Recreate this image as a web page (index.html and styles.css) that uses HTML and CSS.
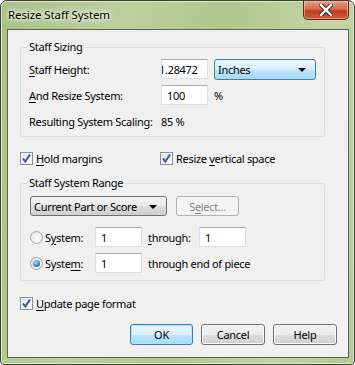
FILE: index.html
```html
<!DOCTYPE html>
<html lang="en">
<head>
    <meta charset="UTF-8">
    <title>Resize Staff System</title>
    <link rel="stylesheet" href="styles.css">
</head>
<body>
    <div class="window">
        <div class="titlebar">
            <span class="title">Resize Staff System</span>
            <span class="close">
                <svg width="14" height="12" viewBox="0 0 14 12">
                    <path d="M2 1 L12 11 M12 1 L2 11" stroke="#3a2a28" stroke-width="4.4" stroke-linecap="square"/>
                    <path d="M2 1 L12 11 M12 1 L2 11" stroke="#ffffff" stroke-width="2.4" stroke-linecap="square"/>
                </svg>
            </span>
        </div>

        <div class="client">
            <div class="group sizing">
                <span class="group-title">Staff Sizing</span>
                <div class="row">
                    <span class="label"><u>S</u>taff Height:</span>
                    <span class="field"><span class="scrolled">1.28472</span></span>
                    <span class="dropdown hot">Inches<span class="arrow"></span></span>
                </div>
                <div class="row">
                    <span class="label"><u>A</u>nd Resize System:</span>
                    <span class="field">100</span>
                    <span class="unit">%</span>
                </div>
                <div class="row">
                    <span class="label">Resulting System Scaling:</span>
                    <span>85 %</span>
                </div>
            </div>

            <div class="row checks">
                <span class="check-item wide">
                    <span class="checkbox"><svg width="11" height="11" viewBox="0 0 11 11"><path d="M2 5.5 L4.3 8.5 L9 1.5" fill="none" stroke="#3b55a8" stroke-width="2"/></svg></span>
                    <span><u>H</u>old margins</span>
                </span>
                <span class="check-item">
                    <span class="checkbox"><svg width="11" height="11" viewBox="0 0 11 11"><path d="M2 5.5 L4.3 8.5 L9 1.5" fill="none" stroke="#3b55a8" stroke-width="2"/></svg></span>
                    <span>Resize <u>v</u>ertical space</span>
                </span>
            </div>

            <div class="group range">
                <span class="group-title">Staff System Range</span>
                <div class="row">
                    <span class="dropdown combo">Current Part or Score<span class="arrow"></span></span>
                    <span class="button disabled"><span>S<u>e</u>lect...</span></span>
                </div>
                <div class="row radio-row first">
                    <span class="radio"></span>
                    <span class="radio-label">S<u>y</u>stem:</span>
                    <span class="field">1</span>
                    <span class="mid-label"><u>t</u>hrough:</span>
                    <span class="field">1</span>
                </div>
                <div class="row radio-row">
                    <span class="radio on"></span>
                    <span class="radio-label">Syste<u>m</u>:</span>
                    <span class="field">1</span>
                    <span class="mid-label">through end of piece</span>
                </div>
            </div>

            <div class="row update">
                <span class="check-item">
                    <span class="checkbox"><svg width="11" height="11" viewBox="0 0 11 11"><path d="M2 5.5 L4.3 8.5 L9 1.5" fill="none" stroke="#3b55a8" stroke-width="2"/></svg></span>
                    <span><u>U</u>pdate page format</span>
                </span>
            </div>

            <div class="buttons">
                <span class="button default">OK</span>
                <span class="button">Cancel</span>
                <span class="button">Help</span>
            </div>
        </div>
    </div>
</body>
</html>
```

FILE: styles.css
```css
body
{
    margin: 0;
    font-family: "Noto Sans", "Open Sans", sans-serif;
    font-size: 11px;
    letter-spacing: -0.3px;
    color: #000;
    background: #ffffff;
}
u
{
    text-decoration: underline;
    text-underline-offset: 2px;
}
.window
{
    width: 355px;
    height: 365px;
    box-sizing: border-box;
    border: 1px solid #39432f;
    border-radius: 7px 7px 4px 4px;
    padding: 0 5px 6px 6px;
    background: linear-gradient(100deg, #a9c088 0%, #bcd09e 30%, #b0c78e 55%, #c3d4a6 80%, #b4c991 100%);
    box-shadow: inset 0 0 0 1px #dfe9cf;
}
.titlebar
{
    height: 28px;
    display: flex;
    justify-content: space-between;
    align-items: flex-start;
}
.title
{
    margin: 6px 0 0 1px;
    font-size: 11.5px;
    letter-spacing: -0.1px;
    text-shadow: 0 0 6px #ffffff, 0 0 10px #f4f8ec, 0 0 3px #ffffff;
}
.close
{
    width: 46px;
    height: 19px;
    box-sizing: border-box;
    border: 1px solid #5e2a1f;
    border-top: none;
    border-radius: 0 0 5px 5px;
    background: linear-gradient(#e9a08c 0%, #d8694e 45%, #c33d1f 55%, #d25a38 100%);
    box-shadow: inset 0 0 0 1px rgba(255, 210, 190, 0.5);
    display: flex;
    align-items: center;
    justify-content: center;
}
.client
{
    width: 342px;
    height: 329px;
    box-sizing: border-box;
    border: 1px solid #56664a;
    background: #f0f0f0;
    padding: 17px 11px 0 12px;
}
.group
{
    position: relative;
    width: 305px;
    box-sizing: border-box;
    border: 1px solid #d5dfe5;
    border-radius: 3px;
    padding: 11px 8px 5px 8px;
}
.group-title
{
    position: absolute;
    top: -9px;
    left: 6px;
    padding: 0 2px;
    background: #f0f0f0;
}
.row
{
    display: flex;
    align-items: center;
    height: 20px;
    white-space: nowrap;
}
.sizing .row + .row
{
    margin-top: 6px;
}
.label
{
    width: 132px;
}
.field
{
    width: 47px;
    height: 20px;
    box-sizing: border-box;
    border: 1px solid #dbdfe6;
    border-top-color: #abadb3;
    background: #fff;
    padding: 0 0 0 5px;
    display: flex;
    align-items: center;
    overflow: hidden;
    white-space: nowrap;
}
.scrolled
{
    margin-left: -8px;
}
.unit
{
    margin-left: 6px;
}
.dropdown
{
    position: relative;
    height: 21px;
    box-sizing: border-box;
    display: flex;
    align-items: center;
    padding-left: 3px;
    border-radius: 3px;
}
.dropdown.hot
{
    width: 102px;
    margin-left: 6px;
    border: 1px solid #3c7fb1;
    background: linear-gradient(#eaf6fd 0%, #d9f0fc 50%, #bee6fd 51%, #a7d9f5 100%);
}
.dropdown.combo
{
    width: 137px;
    height: 20px;
    margin-left: 1px;
    border: 1px solid #707070;
    background: linear-gradient(#f2f2f2 0%, #ebebeb 50%, #dddddd 51%, #cfcfcf 100%);
}
.arrow
{
    position: absolute;
    right: 9px;
    top: 8px;
    width: 0;
    height: 0;
    border-left: 4px solid transparent;
    border-right: 4px solid transparent;
    border-top: 4px solid #000;
}
.checks
{
    margin-top: 11px;
}
.check-item
{
    display: flex;
    align-items: center;
    gap: 3px;
}
.check-item.wide
{
    width: 140px;
}
.checkbox
{
    width: 13px;
    height: 13px;
    box-sizing: border-box;
    border: 1px solid #8e8f8f;
    background: linear-gradient(135deg, #e2e2e2, #fbfbfb);
    box-shadow: inset 0 0 0 1px #f4f4f4;
    display: flex;
    align-items: center;
    justify-content: center;
}
.range
{
    margin-top: 15px;
    padding: 12px 8px 7px 8px;
}
.button
{
    width: 64px;
    height: 21px;
    box-sizing: border-box;
    border: 1px solid #707070;
    border-radius: 3px;
    background: linear-gradient(#f2f2f2 0%, #ebebeb 50%, #dddddd 51%, #cfcfcf 100%);
    box-shadow: inset 0 0 0 1px #fcfcfc;
    display: flex;
    align-items: center;
    justify-content: center;
}
.button.disabled
{
    margin-left: 9px;
    height: 20px;
    width: 63px;
    border-color: #adb2b5;
    background: #f4f4f4;
    color: #838383;
    box-shadow: none;
}
.button.default
{
    width: 63px;
    border-color: #3c7fb1;
    background: linear-gradient(#eaf6fd 0%, #d9f0fc 50%, #bee6fd 51%, #a7d9f5 100%);
    box-shadow: inset 0 0 0 1px #aee3fb;
}
.radio-row
{
    margin-top: 6px;
}
.radio-row.first
{
    margin-top: 11px;
}
.radio
{
    width: 13px;
    height: 13px;
    box-sizing: border-box;
    margin-left: 1px;
    border-radius: 50%;
    border: 1px solid #a8a8a8;
    background: radial-gradient(circle at 60% 60%, #fdfdfd, #dedede);
    position: relative;
}
.radio.on::after
{
    content: "";
    position: absolute;
    left: 2px;
    top: 2px;
    width: 7px;
    height: 7px;
    border-radius: 50%;
    background: radial-gradient(circle at 40% 35%, #a9e4fb, #1d73b5 70%, #0d4f8a);
}
.radio-label
{
    width: 50px;
    margin-left: 2px;
}
.mid-label
{
    width: 51px;
    margin-left: 6px;
}
.update
{
    margin-top: 12px;
}
.buttons
{
    display: flex;
    justify-content: flex-end;
    gap: 8px;
    margin-top: 11px;
}
```
